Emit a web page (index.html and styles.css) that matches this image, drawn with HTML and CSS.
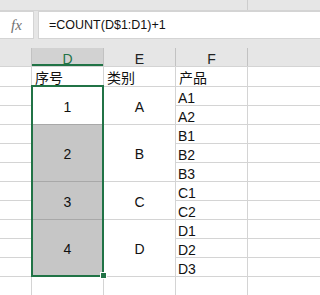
FILE: index.html
```html
<!DOCTYPE html>
<html lang="zh-CN">
<head>
<meta charset="utf-8">
<title>Excel COUNT</title>
<link rel="stylesheet" href="styles.css">
</head>
<body>
<div class="app">
<div class="topband"><div class="topband-seg"></div></div>
<div class="fbar">
  <div class="fx">fx</div>
  <div class="formula">=COUNT(D$1:D1)+1</div>
</div>
<div class="sheet">
  <div class="hd"></div><div class="hd hsel">D</div><div class="hd">E</div><div class="hd">F</div><div class="hd"></div>

  <div class="c"></div><div class="c cjk">序号</div><div class="c cjk">类别</div><div class="c cjk">产品</div><div class="c"></div>

  <div class="c"></div><div class="c m s2 one">1</div><div class="c m s2">A</div><div class="c">A1</div><div class="c"></div>
  <div class="c"></div><div class="c">A2</div><div class="c"></div>

  <div class="c"></div><div class="c m s3 g">2</div><div class="c m s3">B</div><div class="c">B1</div><div class="c"></div>
  <div class="c"></div><div class="c">B2</div><div class="c"></div>
  <div class="c"></div><div class="c">B3</div><div class="c"></div>

  <div class="c"></div><div class="c m s2 g">3</div><div class="c m s2">C</div><div class="c">C1</div><div class="c"></div>
  <div class="c"></div><div class="c">C2</div><div class="c"></div>

  <div class="c"></div><div class="c m s3 g">4</div><div class="c m s3">D</div><div class="c">D1</div><div class="c"></div>
  <div class="c"></div><div class="c">D2</div><div class="c"></div>
  <div class="c"></div><div class="c">D3</div><div class="c"></div>

  <div class="c"></div><div class="c"></div><div class="c"></div><div class="c"></div><div class="c"></div>

  <div class="sel-box"></div>
  <div class="handle"></div>
</div>
</div>
</body>
</html>
```
FILE: styles.css
```css
html, body {
  margin: 0;
  padding: 0;
  background: #e6e6e6;
  overflow: hidden;
}
.app {
  min-width: 267px;
  height: 295px;
  overflow: hidden;
  background: #e6e6e6;
  font-family: "Liberation Sans", "Noto Sans CJK SC", sans-serif;
  color: #1a1a1a;
}
.topband {
  height: 10px;
  border-bottom: 1px solid #d4d4d4;
  display: flex;
}
.topband-seg {
  width: 247px;
  border-right: 1px solid #cdcdcd;
}
.fbar {
  display: flex;
  gap: 4px;
  height: 28px;
  margin: 0 -1px 9px -1px;
}
.fx {
  width: 35px;
  flex: none;
  box-sizing: border-box;
  background: #fff;
  border: 1px solid #d4d4d4;
  display: flex;
  align-items: center;
  justify-content: center;
  font-family: "Liberation Serif", serif;
  font-style: italic;
  font-size: 15px;
  color: #707070;
  padding-top: 1px;
}
.formula {
  flex: 1;
  box-sizing: border-box;
  background: #fff;
  border: 1px solid #d4d4d4;
  padding-left: 10px;
  display: flex;
  align-items: center;
  font-size: 12.5px;
  color: #111;
}
.sheet {
  position: relative;
  display: grid;
  grid-template-columns: 31px 71px 71px 71px minmax(71px, 1fr);
  grid-template-rows: 18px 19px repeat(11, 18px);
  gap: 1px;
  background: #d4d4d4;
}
.hd {
  background: #e6e6e6;
  box-sizing: border-box;
  text-align: center;
  font-size: 14px;
  line-height: 18px;
  padding-top: 2px;
  color: #222;
  box-shadow: 1px 0 0 #c2c2c2;
}
.hsel {
  background: #d2d2d2;
  color: #217346;
  border-bottom: 2px solid #217346;
}
.c {
  background: #fff;
  display: flex;
  align-items: flex-end;
  box-sizing: border-box;
  padding-left: 2px;
  font-size: 14px;
  line-height: 14px;
  color: #111;
}
.cjk {
  line-height: 16px;
  padding-left: 3px;
}
.m {
  justify-content: center;
  align-items: center;
  padding: 2px 0 0 0;
}
.s2 {
  grid-row: span 2;
}
.s3 {
  grid-row: span 3;
}
.one {
  padding-top: 3px;
}
.g {
  background: #c6c6c6;
  box-shadow: 0 -1px 0 #a8a8a8;
}
.sel-box {
  position: absolute;
  left: 31px;
  top: 37px;
  width: 73px;
  height: 192px;
  box-sizing: border-box;
  border: 2px solid #217346;
  pointer-events: none;
}
.handle {
  position: absolute;
  left: 100px;
  top: 224px;
  width: 7px;
  height: 7px;
  box-sizing: border-box;
  border: 1px solid #fff;
  background: #217346;
}
```
